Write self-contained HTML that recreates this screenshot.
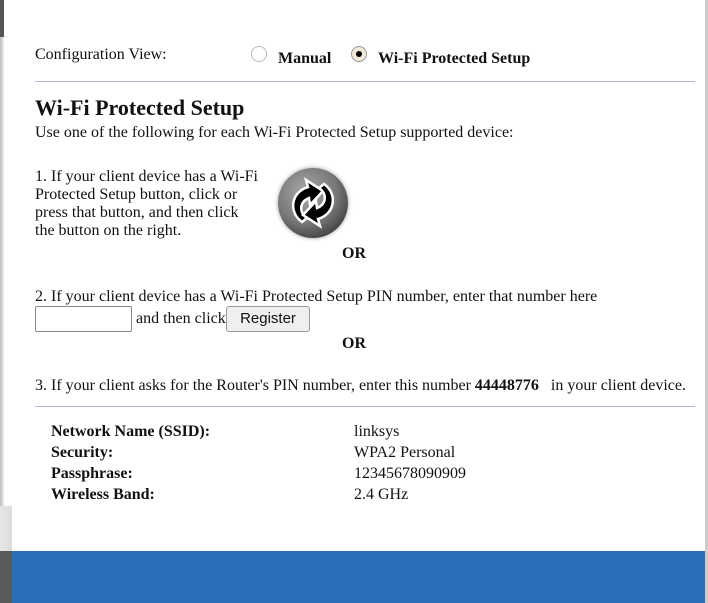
<!DOCTYPE html>
<html><head><meta charset="utf-8"><style>
body{margin:0;width:708px;height:603px;overflow:hidden;background:#fff;position:relative;font-family:"Liberation Serif",serif;font-size:16px;color:#111}
.a{position:absolute;white-space:nowrap}
.b{font-weight:bold}
.radio{position:absolute;width:16px;height:16px;border-radius:50%;border:1px solid #bbb;box-sizing:border-box;background:#fff}
</style></head><body>
<div style="position:absolute;left:0;top:0;width:4px;height:37px;background:#555"></div>
<div style="position:absolute;left:0;top:37px;width:4px;height:469px;background:linear-gradient(90deg,#bbb,#eee)"></div>
<div style="position:absolute;left:0;top:506px;width:12px;height:45px;background:linear-gradient(90deg,#e6e6e6,#ddd)"></div>
<div style="position:absolute;left:0;top:551px;width:12px;height:52px;background:#5a5a5a"></div>
<div style="position:absolute;right:0;top:0;width:3px;height:603px;background:#ccc"></div>
<div style="position:absolute;left:12px;top:551px;width:693px;height:52px;background:#2a70b8"></div>

<div class="a" style="left:35px;top:46px">Configuration View:</div>
<div class="radio" style="left:251px;top:46px"></div>
<div class="a b" style="left:278px;top:50px">Manual</div>
<div class="radio" style="left:351px;top:46px;border-color:#999;background:#f2ead8"><div style="position:absolute;left:4px;top:4px;width:6px;height:6px;border-radius:50%;background:#000"></div></div>
<div class="a b" style="left:378px;top:50px">Wi-Fi Protected Setup</div>
<div style="position:absolute;left:35px;top:81px;width:660px;height:1px;background:#b8b4d8"></div>

<div class="a b" style="left:35px;top:95px;font-size:22px">Wi-Fi Protected Setup</div>
<div class="a" style="left:35px;top:124px">Use one of the following for each Wi-Fi Protected Setup supported device:</div>

<div class="a" style="left:35px;top:168px;line-height:18px">1. If your client device has a Wi-Fi<br>Protected Setup button, click or<br>press that button, and then click<br>the button on the right.</div>
<div style="position:absolute;left:278px;top:168px;width:70px;height:70px;border-radius:50%;background:radial-gradient(circle at 40% 35%,#aaa,#777 50%,#3a3a3a 82%,#ccc 100%);box-shadow:0 0 4px #999"></div>
<svg style="position:absolute;left:278px;top:168px" width="70" height="70" viewBox="0 0 70 70">
<path d="M24 54 C10 44 13 24 30 19 L28 12 L45 23 L32 37 L31 30 C21 34 21 45 29 50 Z" fill="#000" stroke="#fff" stroke-width="2.5"/>
<path d="M46 16 C60 26 57 46 40 51 L42 58 L25 47 L38 33 L39 40 C49 36 49 25 41 20 Z" fill="#000" stroke="#fff" stroke-width="2.5"/>
</svg>
<div class="a b" style="left:342px;top:245px">OR</div>

<div class="a" style="left:35px;top:288px">2. If your client device has a Wi-Fi Protected Setup PIN number, enter that number here</div>
<div style="position:absolute;left:35px;top:306px;width:97px;height:26px;border:1px solid #888;border-radius:2px;box-sizing:border-box"></div>
<div class="a" style="left:136px;top:310px">and then click</div>
<div class="a" style="left:226px;top:306px;width:84px;height:26px;border:1px solid #999;border-radius:3px;background:#efefef;box-sizing:border-box;font-family:'Liberation Sans',sans-serif;font-size:15px;text-align:center;line-height:24px">Register</div>
<div class="a b" style="left:342px;top:335px">OR</div>

<div class="a" style="left:35px;top:377px">3. If your client asks for the Router's PIN number, enter this number <b>44448776</b> &nbsp; in your client device.</div>
<div style="position:absolute;left:35px;top:406px;width:660px;height:1px;background:#b8b4d8"></div>

<div class="a b" style="left:51px;top:423px">Network Name (SSID):</div><div class="a" style="left:354px;top:423px">linksys</div>
<div class="a b" style="left:51px;top:444px">Security:</div><div class="a" style="left:354px;top:444px">WPA2 Personal</div>
<div class="a b" style="left:51px;top:465px">Passphrase:</div><div class="a" style="left:354px;top:465px">12345678090909</div>
<div class="a b" style="left:51px;top:486px">Wireless Band:</div><div class="a" style="left:354px;top:486px">2.4 GHz</div>
</body></html>
